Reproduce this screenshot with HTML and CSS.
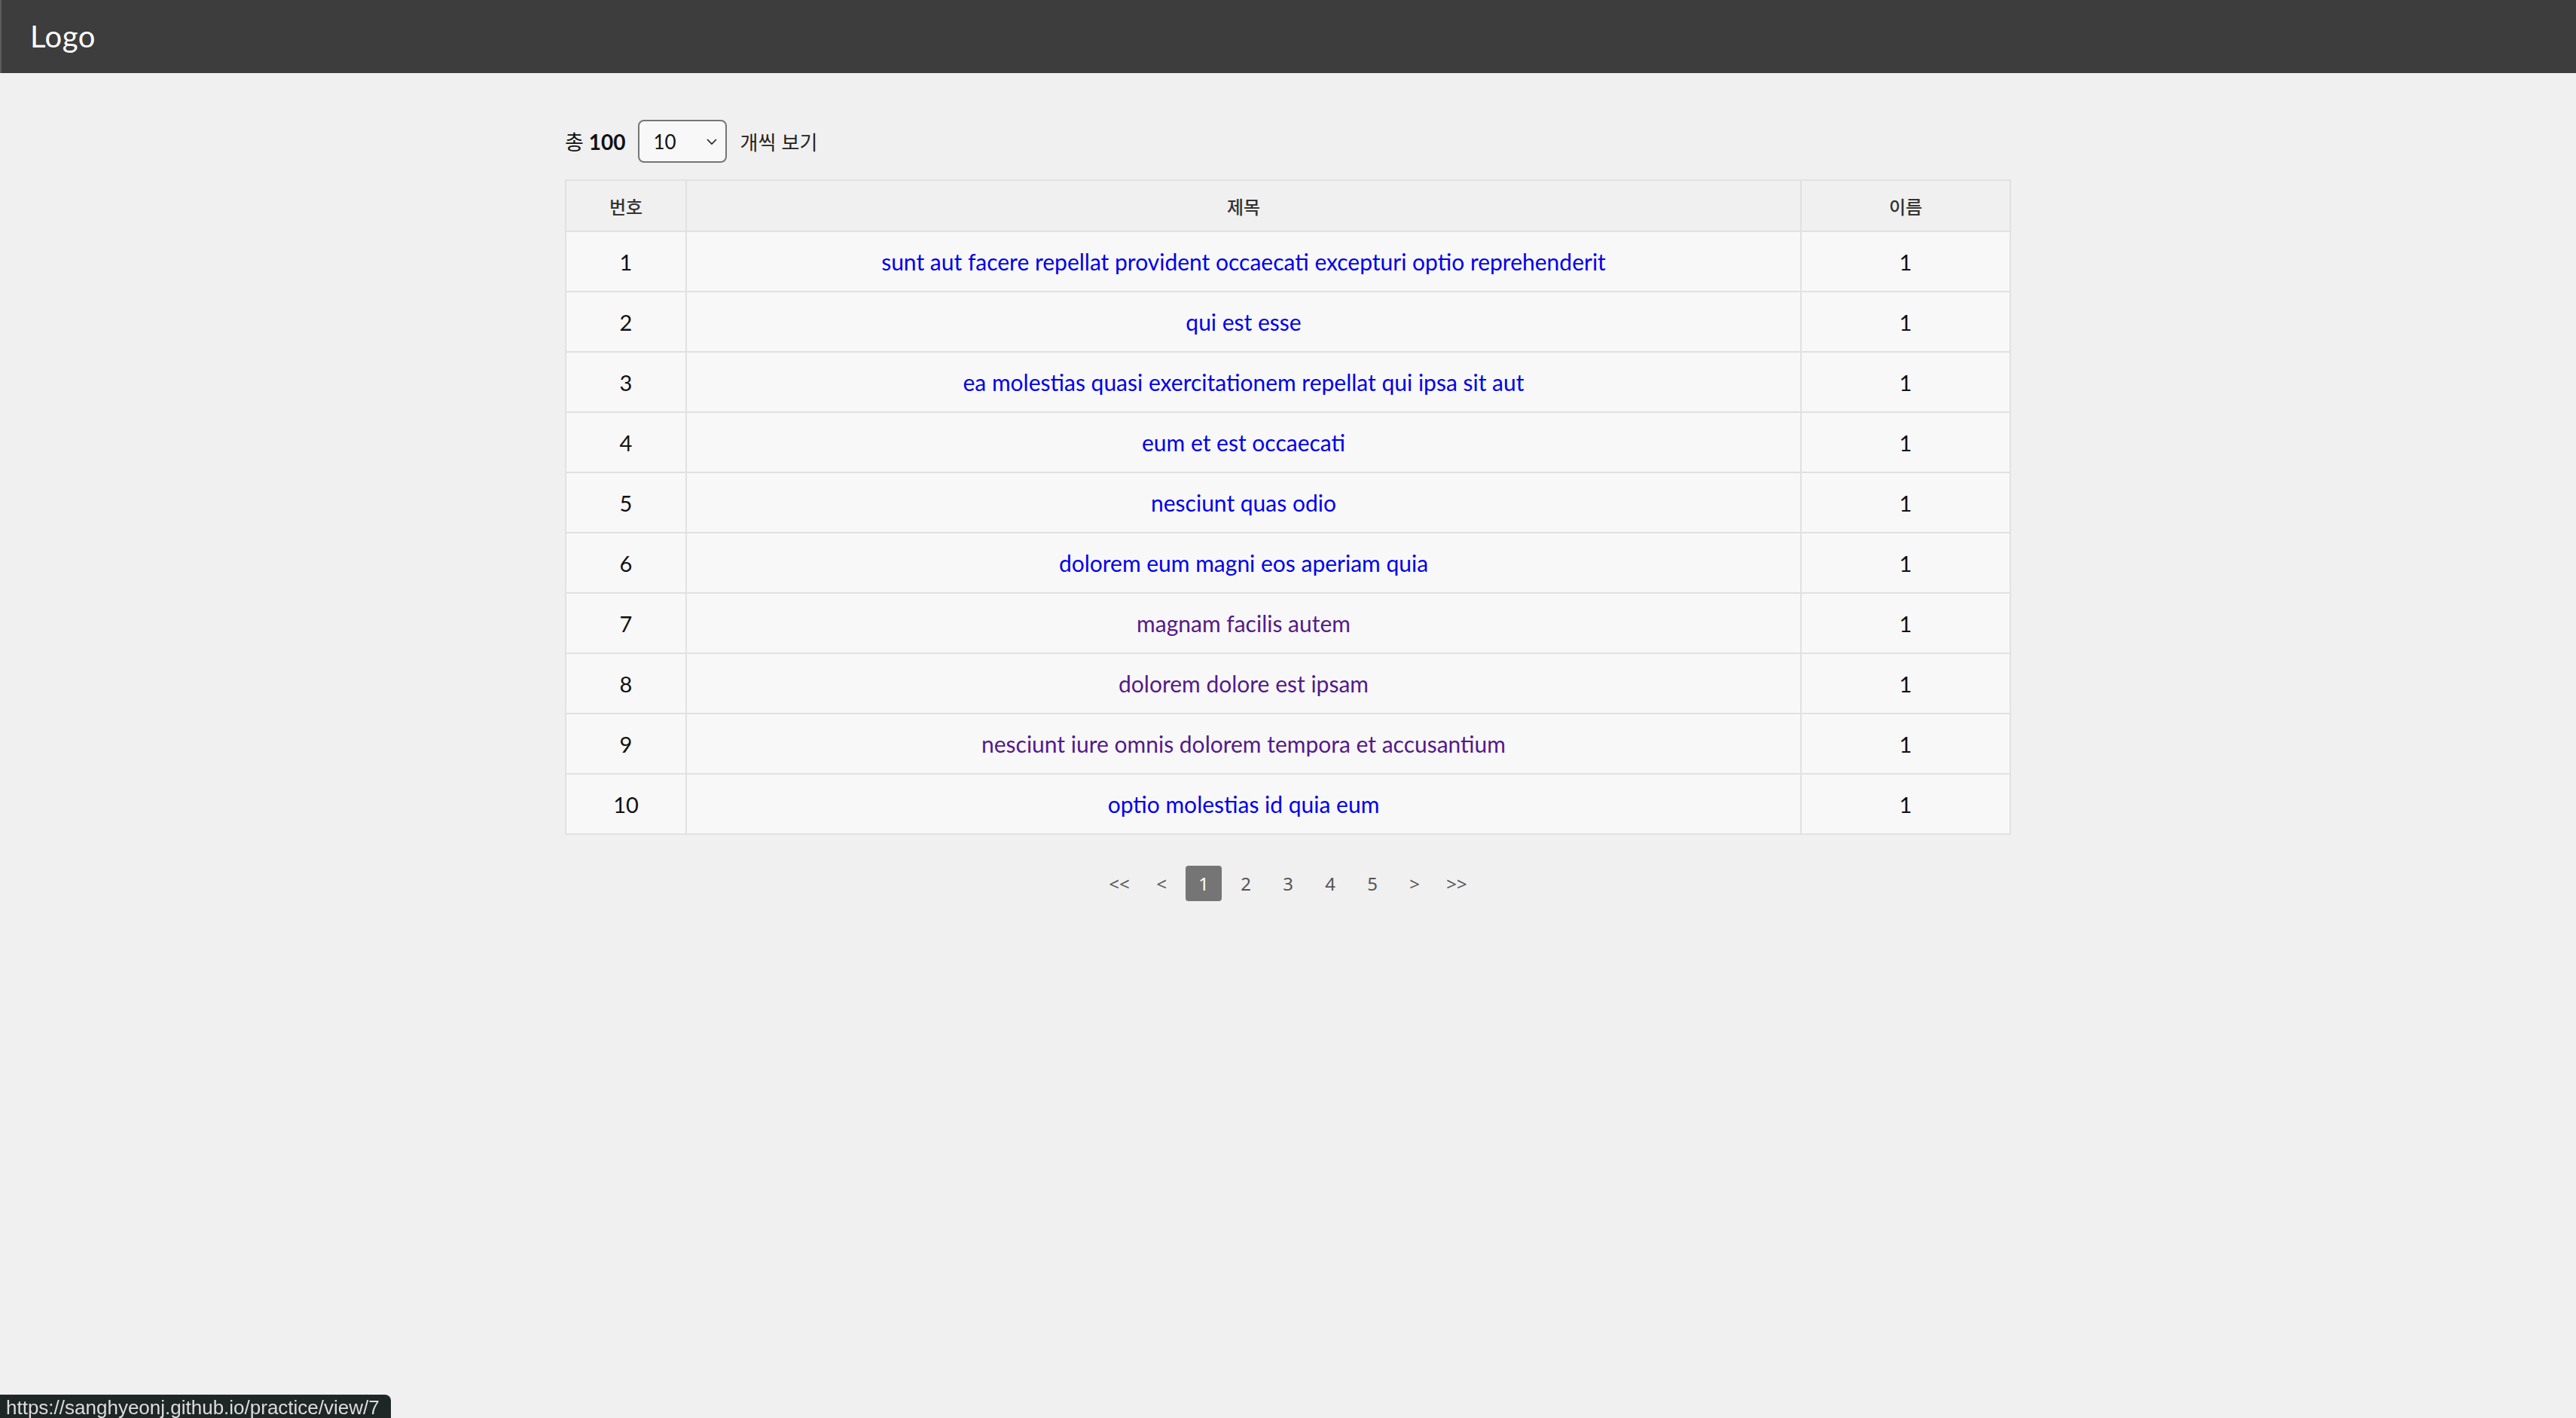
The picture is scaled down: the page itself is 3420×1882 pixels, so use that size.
FILE: index.html
```html
<!DOCTYPE html>
<html lang="ko">
<head>
<meta charset="utf-8">
<title>Practice</title>
<link rel="stylesheet" href="styles.css">
</head>
<body>
<header class="topbar"><span class="logo">Logo</span></header>
<main class="content">
  <div class="toolbar">
    <span class="total"><span class="ko">총</span> <b>100</b></span>
    <div class="select-wrap">
      <select class="per-page">
        <option>10</option>
        <option>20</option>
        <option>50</option>
      </select>
      <svg class="chev" width="16" height="10" viewBox="0 0 16 10"><path d="M2 2 L8 8 L14 2" fill="none" stroke="#222" stroke-width="1.6"/></svg>
    </div>
    <span class="ko per-label">개씩 보기</span>
  </div>
  <table class="board">
    <thead>
      <tr><th class="c-num">번호</th><th class="c-title">제목</th><th class="c-name">이름</th></tr>
    </thead>
    <tbody>
      <tr><td>1</td><td><a class="link" href="#">sunt aut facere repellat provident occaecati excepturi optio reprehenderit</a></td><td>1</td></tr>
      <tr><td>2</td><td><a class="link" href="#">qui est esse</a></td><td>1</td></tr>
      <tr><td>3</td><td><a class="link" href="#">ea molestias quasi exercitationem repellat qui ipsa sit aut</a></td><td>1</td></tr>
      <tr><td>4</td><td><a class="link" href="#">eum et est occaecati</a></td><td>1</td></tr>
      <tr><td>5</td><td><a class="link" href="#">nesciunt quas odio</a></td><td>1</td></tr>
      <tr><td>6</td><td><a class="link" href="#">dolorem eum magni eos aperiam quia</a></td><td>1</td></tr>
      <tr><td>7</td><td><a class="link visited" href="#">magnam facilis autem</a></td><td>1</td></tr>
      <tr><td>8</td><td><a class="link visited" href="#">dolorem dolore est ipsam</a></td><td>1</td></tr>
      <tr><td>9</td><td><a class="link visited" href="#">nesciunt iure omnis dolorem tempora et accusantium</a></td><td>1</td></tr>
      <tr><td>10</td><td><a class="link" href="#">optio molestias id quia eum</a></td><td>1</td></tr>
    </tbody>
  </table>
  <nav class="pager">
    <span class="pg">&lt;&lt;</span>
    <span class="pg">&lt;</span>
    <span class="pg active">1</span>
    <span class="pg">2</span>
    <span class="pg">3</span>
    <span class="pg">4</span>
    <span class="pg">5</span>
    <span class="pg">&gt;</span>
    <span class="pg">&gt;&gt;</span>
  </nav>
</main>
<div class="status">https://sanghyeonj.github.io/practice/view/7</div>
</body>
</html>
```
FILE: styles.css
```css
html, body {
  margin: 0;
  padding: 0;
}
body {
  background: #f0f0f0;
  font-family: "Lato", "Noto Sans CJK KR", sans-serif;
  color: #111;
  min-height: 1882px;
}
.topbar {
  height: 97px;
  background: #3d3d3d;
  display: flex;
  align-items: center;
  padding-left: 38px;
  border-left: 2px solid #5c5c5c;
  box-sizing: border-box;
}
.logo {
  color: #fff;
  font-family: "Lato", sans-serif;
  font-size: 40px;
  font-weight: 400;
  letter-spacing: 0.5px;
  margin-top: -2px;
}
.content {
  width: 1920px;
  margin: 0 auto;
  padding-top: 62px;
}
.toolbar {
  display: flex;
  align-items: center;
  height: 57px;
  margin-bottom: 22px;
  font-size: 27px;
}
.ko {
  font-family: "Noto Sans CJK KR", sans-serif;
}
.total {
  margin-right: 16px;
}
.total b {
  font-family: "Lato", sans-serif;
  font-weight: 700;
  font-size: 28px;
}
.select-wrap {
  position: relative;
  width: 118px;
  height: 57px;
  margin-right: 18px;
}
.per-page {
  appearance: none;
  -webkit-appearance: none;
  width: 100%;
  height: 100%;
  box-sizing: border-box;
  border: 2px solid #767676;
  border-radius: 8px;
  background: #f8f8f8;
  padding-left: 19px;
  font-family: "Lato", sans-serif;
  font-size: 26px;
  color: #111;
}
.chev {
  position: absolute;
  right: 12px;
  top: 24px;
  pointer-events: none;
}
.per-label {
  font-size: 26px;
  color: #222;
}
.board {
  width: 100%;
  border-collapse: collapse;
  border: 2px solid #e1e1e1;
}
.board th, .board td {
  border: 2px solid #e1e1e1;
  text-align: center;
  padding: 0;
}
.board th {
  height: 66px;
  background: #f0f0f0;
  font-family: "Noto Sans CJK KR", sans-serif;
  font-size: 24px;
  font-weight: 500;
  color: #333;
}
.c-num { width: 158px; }
.c-name { width: 276px; }
.board td {
  height: 78px;
  background: #f8f8f8;
  font-size: 29px;
  font-weight: 400;
  color: #111;
}
.link {
  color: #0000ee;
  text-decoration: none;
  font-size: 30px;
}
.link.visited {
  color: #551a8b;
}
.pager {
  display: flex;
  justify-content: center;
  align-items: center;
  gap: 8px;
  margin-top: 41px;
  font-family: "Noto Sans", sans-serif;
  font-size: 24px;
  color: #555;
}
.pg {
  min-width: 48px;
  height: 47px;
  display: flex;
  align-items: center;
  justify-content: center;
  border-radius: 4px;
  box-sizing: border-box;
}
.pg.active {
  background: #757575;
  color: #fff;
}
.status {
  position: fixed;
  left: 0;
  bottom: 0;
  width: 519px;
  height: 31px;
  box-sizing: border-box;
  background: #1f2726;
  color: #dcdcdc;
  font-family: "Liberation Sans", sans-serif;
  font-size: 26px;
  line-height: 30px;
  padding: 2px 0 0 8px;
  border-top-right-radius: 8px;
  overflow: hidden;
  white-space: nowrap;
}
```
